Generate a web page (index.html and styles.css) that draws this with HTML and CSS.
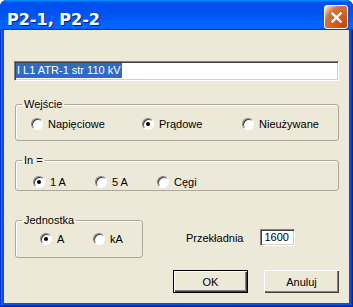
FILE: index.html
```html
<!DOCTYPE html>
<html lang="pl">
<head>
<meta charset="UTF-8" />
<title>P2-1, P2-2</title>
<link rel="stylesheet" href="styles.css">
</head>
<body>
  <div class="window">
    <div class="titlebar">
      <span class="title">P2-1, P2-2</span>
      <button class="close" aria-label="Zamknij">
        <svg width="11" height="11" viewBox="0 0 11 11">
          <path d="M1.5 1.5 L9.5 9.5 M9.5 1.5 L1.5 9.5" stroke="#fff" stroke-width="2.4" stroke-linecap="square" />
        </svg>
      </button>
    </div>

    <div class="client">
      <div class="textbox name"><span class="sel">I L1 ATR-1 str 110 kV</span></div>

      <fieldset class="group wejscie">
        <legend>Wejście</legend>
        <div class="row">
          <label class="radio"><i></i>Napięciowe</label>
          <label class="radio on"><i></i>Prądowe</label>
          <label class="radio"><i></i>Nieużywane</label>
        </div>
      </fieldset>

      <fieldset class="group prad">
        <legend>In =</legend>
        <div class="row">
          <label class="radio on"><i></i>1 A</label>
          <label class="radio"><i></i>5 A</label>
          <label class="radio"><i></i>Cęgi</label>
        </div>
      </fieldset>

      <div class="bottom">
        <fieldset class="group jednostka">
          <legend>Jednostka</legend>
          <div class="row">
            <label class="radio on"><i></i>A</label>
            <label class="radio"><i></i>kA</label>
          </div>
        </fieldset>

        <div class="ratio">
          <span>Przekładnia</span>
          <div class="textbox small">1600</div>
        </div>
      </div>

      <div class="buttons">
        <button class="btn default">OK</button>
        <button class="btn">Anuluj</button>
      </div>
    </div>
  </div>
</body>
</html>
```

FILE: styles.css
```css
* {
  box-sizing: border-box;
}

body {
  margin: 0;
  background: #fff;
  font-family: "Liberation Sans", Arial, sans-serif;
  font-size: 11px;
  color: #000;
}

/* Window frame */
.window {
  width: 353px;
  height: 307px;
  display: flex;
  flex-direction: column;
  background: #0A4FE0;
  border-radius: 7px 7px 0 0;
  overflow: hidden;
  box-shadow: inset 1px 0 #0831D9, inset -1px 0 #001EA0, inset 0 -1px #001EA0, inset 2px 0 #166AEE, inset -2px 0 #003BDA, inset 0 -2px #003BDA;
}

.titlebar {
  height: 30px;
  flex-shrink: 0;
  display: flex;
  justify-content: space-between;
  align-items: flex-start;
  padding: 0 5px 0 7px;
  background: linear-gradient(180deg, #0997ff, #0053ee 8%, #0050ee 40%, #06f 88%, #06f 93%, #005bff 95%, #003dd7 96%, #003dd7);
}

.title {
  padding-top: 10px;
  font: bold 16px/19px "DejaVu Sans", sans-serif;
  color: #fff;
  text-shadow: 1px 1px 0 #0F1B8C;
}

.close {
  margin-top: 5px;
  width: 24px;
  height: 24px;
  padding: 0;
  display: flex;
  align-items: center;
  justify-content: center;
  border: 1px solid #fff;
  border-radius: 3px;
  background: radial-gradient(circle at 90% 90%, #cc4600 0, #dc6527 55%, #cd7546 70%, #ffccb2 90%, #fff 100%);
}

.client {
  flex: 1;
  margin: 0 4px 4px;
  background: #ECE9D8;
  padding: 31px 10px 0;
  display: flex;
  flex-direction: column;
}

/* Sunken text fields */
.textbox {
  background: #fff;
  border: 1px solid;
  border-color: #808080 #fff #fff #808080;
  box-shadow: inset 1px 1px #404040, inset -1px -1px #D4D0C8;
}

.name {
  height: 20px;
  padding: 1px 1px;
  line-height: 15px;
}

.sel {
  display: inline-block;
  background: #316AC5;
  color: #fff;
  padding: 0 1px;
}

.small {
  width: 35px;
  height: 17px;
  padding: 1px 3px;
  line-height: 13px;
}

/* Group boxes */
.group {
  margin: 0 0 0 1px;
  padding: 0;
  min-width: 0;
  border: 1px solid #ACA899;
  border-radius: 3px;
  box-shadow: inset 1px 1px #fff;
}

.group legend {
  margin-left: 6px;
  padding: 0 2px;
  line-height: 13px;
}

.row {
  display: grid;
  height: 13px;
  align-items: center;
}

.wejscie {
  margin-top: 17px;
}
.wejscie .row {
  grid-template-columns: 111px 100px auto;
  margin: 6px 0 10px 15px;
}

.prad {
  margin-top: 13px;
}
.prad .row {
  grid-template-columns: 62px 62px auto;
  margin: 8px 0 2px 17px;
}

.bottom {
  display: flex;
  align-items: flex-start;
  margin-top: 23px;
}

.jednostka {
  width: 128px;
}
.jednostka .row {
  grid-template-columns: 53px auto;
  margin: 5px 0 12px 24px;
}

.ratio {
  display: flex;
  align-items: center;
  gap: 17px;
  margin: 15px 0 0 43px;
}

/* Classic radio buttons */
.radio {
  display: inline-flex;
  align-items: center;
  gap: 5px;
  white-space: nowrap;
}

.radio i {
  position: relative;
  width: 12px;
  height: 12px;
  border-radius: 50%;
  border: 1px solid;
  border-color: #808080 #fff #fff #808080;
  box-shadow: inset 1px 1px #404040;
  background: #fff;
}

.radio.on i::after {
  content: "";
  position: absolute;
  left: 3px;
  top: 3px;
  width: 4px;
  height: 4px;
  border-radius: 50%;
  background: #000;
}

/* Push buttons */
.buttons {
  display: flex;
  justify-content: flex-end;
  gap: 16px;
  margin-top: 12px;
}

.btn {
  width: 75px;
  height: 23px;
  padding: 0;
  font: inherit;
  color: #000;
  background: #ECE9D8;
  border: none;
  box-shadow: inset 1px 1px #fff, inset -1px -1px #404040, inset -2px -2px #808080;
}

.btn.default {
  border: 1px solid #000;
}
```
